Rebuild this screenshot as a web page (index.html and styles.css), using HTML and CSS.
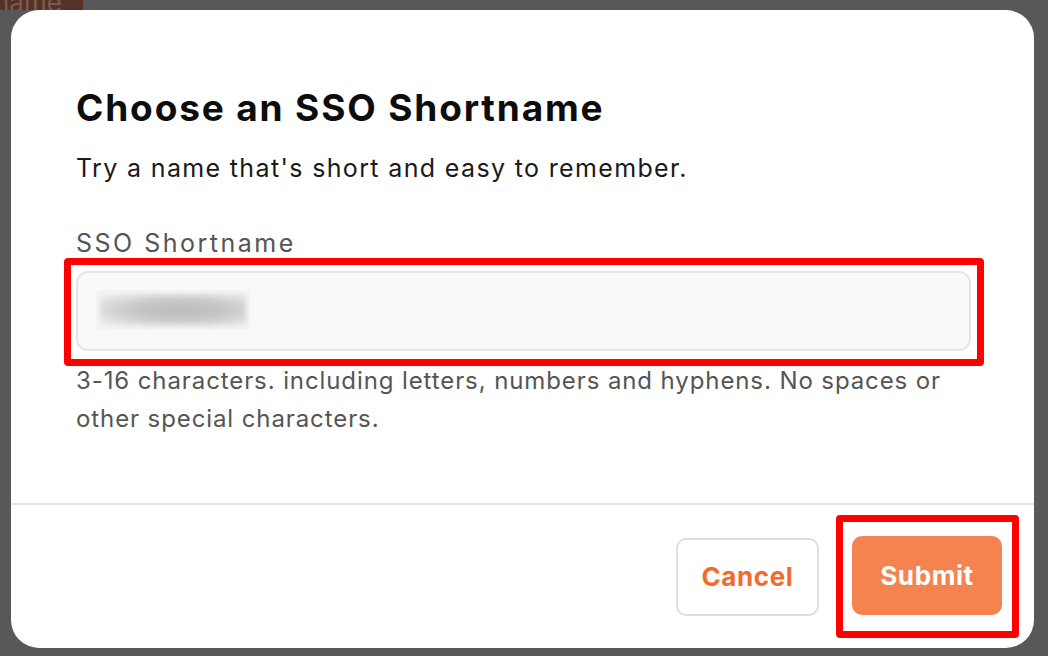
FILE: index.html
```html
<!DOCTYPE html>
<html>
<head>
<meta charset="utf-8">
<link rel="stylesheet" href="styles.css">
</head>
<body>
<div class="behind">name</div>
<div class="modal">
  <div class="modal-body">
    <h1 class="title">Choose an SSO Shortname</h1>
    <p class="subtitle">Try a name that's short and easy to remember.</p>
    <label class="label">SSO Shortname</label>
    <div class="mark mark-input">
      <div class="input">
        <div class="blurred"><span class="blob"></span></div>
      </div>
    </div>
    <p class="help">3-16 characters. including letters, numbers and hyphens. No spaces or other special characters.</p>
  </div>
  <div class="modal-footer">
    <button class="btn btn-cancel">Cancel</button>
    <div class="mark mark-submit">
      <button class="btn btn-submit">Submit</button>
    </div>
  </div>
</div>
</body>
</html>
```

FILE: styles.css
```css
html, body {
  margin: 0;
  padding: 0;
  width: 1048px;
  height: 656px;
  overflow: hidden;
  background: #58585a;
  font-family: "Inter", "Liberation Sans", sans-serif;
}
body {
  padding: 10px 14px 8px 11px;
  box-sizing: border-box;
  position: relative;
}
.behind {
  position: absolute;
  left: 0;
  top: 0;
  width: 83px;
  height: 10px;
  background: #553126;
  color: #7b5b52;
  font-size: 26px;
  line-height: 6px;
  overflow: hidden;
  text-indent: -6px;
  white-space: nowrap;
}
.modal {
  position: relative;
  width: 100%;
  height: 100%;
  background: #fff;
  border-radius: 28px;
  display: flex;
  flex-direction: column;
  overflow: hidden;
}
.modal-body {
  flex: 1;
  padding: 78px 63px 0 65px;
  display: flex;
  flex-direction: column;
}
.title {
  margin: 0;
  font-size: 37px;
  font-weight: 700;
  line-height: 40px;
  color: #0d0d0d;
  letter-spacing: 1.85px;
}
.subtitle {
  margin: 25px 0 0;
  font-size: 25px;
  line-height: 30px;
  color: #1a1a1a;
  letter-spacing: 1.35px;
}
.label {
  margin-top: 45px;
  font-size: 25px;
  line-height: 30px;
  color: #555;
  letter-spacing: 2.5px;
}
.mark {
  border: 7px solid #ff0000;
  border-radius: 4px;
  box-sizing: border-box;
}
.mark-input {
  margin: 0 0 0 -12px;
  width: 920px;
  padding: 6px 6px 8px 5px;
}
.input {
  height: 80px;
  box-sizing: border-box;
  background: #f9f9f9;
  border: 2px solid #e6e6e6;
  border-radius: 12px;
  padding: 17px 0 0 18px;
}
.blurred {
  width: 154px;
  height: 40px;
  background: #f4f4f4;
  display: flex;
  align-items: center;
  justify-content: center;
}
.blob {
  display: block;
  width: 146px;
  height: 32px;
  background: radial-gradient(ellipse at 55% 50%, #bcbcbc 0%, #c6c6c6 40%, #dcdcdc 70%, rgba(244,244,244,0) 100%);
  filter: blur(2px);
}
.help {
  margin: -4px 0 0;
  font-size: 24px;
  line-height: 38px;
  color: #555;
  width: 895px;
  letter-spacing: 0.9px;
}
.modal-footer {
  border-top: 2px solid #e6e6e6;
  height: 145px;
  box-sizing: border-box;
  display: flex;
  align-items: center;
  justify-content: flex-end;
  gap: 17px;
  padding-right: 15px;
}
.btn {
  font-family: inherit;
  font-size: 26px;
  font-weight: 700;
  letter-spacing: 0.6px;
  border-radius: 10px;
  cursor: pointer;
}
.btn-cancel {
  width: 143px;
  height: 78px;
  background: #fff;
  border: 2px solid #dedede;
  color: #f26b2a;
}
.mark-submit {
  padding: 14px 10px 16px 9px;
}
.btn-submit {
  display: block;
  width: 150px;
  height: 79px;
  background: #f5834f;
  border: none;
  color: #fff;
}
```
